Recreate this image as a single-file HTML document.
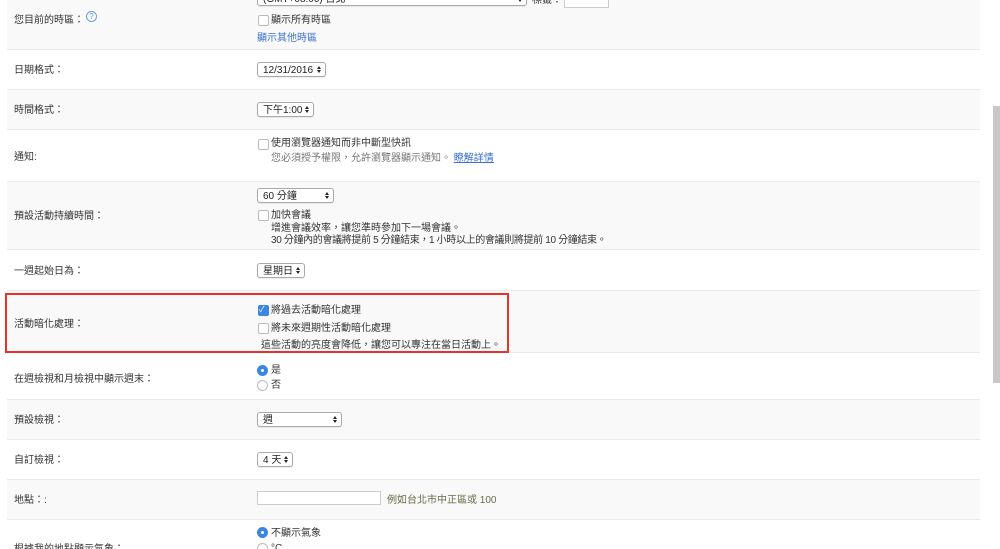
<!DOCTYPE html>
<html><head><meta charset="utf-8"><style>
html,body{margin:0;width:1000px;height:549px;overflow:hidden}
body{background:#fff;font-family:"Liberation Sans","Noto Sans CJK TC",sans-serif;font-size:10px;color:#333;position:relative}
.r{position:absolute;left:7px;width:973px;border-bottom:1px solid #ebebeb;box-sizing:border-box}
.g{background:#f9f9f9}
.a{position:absolute;white-space:nowrap;line-height:12px;margin-top:2px}
.sel{position:absolute;height:15px;border:1px solid #a9a9a9;border-radius:3px;background:#fff;box-sizing:border-box;font-size:10px;line-height:15px;padding-left:5px;color:#222;box-shadow:0 1px 1px rgba(0,0,0,.08)}
.sel:after{content:"";position:absolute;right:4px;top:3px;width:0;height:0;border-left:2px solid transparent;border-right:2px solid transparent;border-bottom:3px solid #222}
.sel:before{content:"";position:absolute;right:4px;top:7px;width:0;height:0;border-left:2px solid transparent;border-right:2px solid transparent;border-top:3px solid #222}
.cb{position:absolute;width:9px;height:9px;border:1px solid #bbb;border-radius:2px;background:#fff}
.cbc{background:#3b86e0;border-color:#3b86e0}
.rd{position:absolute;width:9px;height:9px;border:1px solid #bbb;border-radius:50%;background:#fff}
.rdc{background:#3b86e0;border-color:#3b86e0}
.rdc:after{content:"";position:absolute;left:3px;top:3px;width:3px;height:3px;border-radius:50%;background:#fff}
.lk{color:#3b6fd4}
</style></head><body>
<div class="r g" style="top:0;height:50px"></div>
<div class="r" style="top:50px;height:40px"></div>
<div class="r g" style="top:90px;height:40px"></div>
<div class="r" style="top:130px;height:52px"></div>
<div class="r g" style="top:182px;height:68px"></div>
<div class="r" style="top:250px;height:41px"></div>
<div class="r g" style="top:291px;height:62px"></div>
<div class="r" style="top:353px;height:47px"></div>
<div class="r g" style="top:400px;height:40px"></div>
<div class="r" style="top:440px;height:40px"></div>
<div class="r g" style="top:480px;height:40px"></div>
<div class="r" style="top:520px;height:29px;border-bottom:0"></div>

<div style="position:absolute;left:993px;top:106px;width:7px;height:277px;background:#c8c8c8"></div>

<div class="a" style="left:14px;top:13px">您目前的時區：</div>
<div style="position:absolute;left:86px;top:11px;width:9px;height:9px;border:1px solid #6aa0e0;border-radius:50%;color:#6aa0e0;font-size:8px;line-height:9px;text-align:center">?</div>
<div class="sel" style="left:257px;top:-9px;width:270px">(GMT+08:00) 台北</div>
<div class="a" style="left:532px;top:-7px">標籤：</div>
<div style="position:absolute;left:564px;top:-8px;width:43px;height:14px;border:1px solid #ccc;background:#fff"></div>
<div class="cb" style="left:258px;top:15px"></div><div class="a" style="left:271px;top:13px">顯示所有時區</div>
<div class="a lk" style="left:257px;top:31px">顯示其他時區</div>

<div class="a" style="left:14px;top:63px">日期格式：</div>
<div class="sel" style="left:257px;top:62px;width:69px">12/31/2016</div>

<div class="a" style="left:14px;top:103px">時間格式：</div>
<div class="sel" style="left:257px;top:102px;width:57px">下午1:00</div>

<div class="cb" style="left:258px;top:139px"></div><div class="a" style="left:271px;top:136px">使用瀏覽器通知而非中斷型快訊</div>
<div class="a" style="left:14px;top:150px">通知:</div>
<div class="a" style="left:271px;top:151px;color:#777">您必須授予權限，允許瀏覽器顯示通知。 <span class="lk" style="text-decoration:underline">瞭解詳情</span></div>

<div class="sel" style="left:257px;top:188px;width:77px">60 分鐘</div>
<div class="a" style="left:14px;top:209px">預設活動持續時間：</div>
<div class="cb" style="left:258px;top:210px"></div><div class="a" style="left:271px;top:208px">加快會議</div>
<div class="a" style="left:271px;top:221px">增進會議效率，讓您準時參加下一場會議。</div>
<div class="a" style="left:271px;top:233px;letter-spacing:-0.35px">30 分鐘內的會議將提前 5 分鐘結束，1 小時以上的會議則將提前 10 分鐘結束。</div>

<div class="a" style="left:14px;top:264px">一週起始日為：</div>
<div class="sel" style="left:257px;top:263px;width:48px">星期日</div>

<div style="position:absolute;left:5px;top:293px;width:504px;height:60px;border:2px solid #e8312a;box-sizing:border-box"></div>
<div class="a" style="left:14px;top:317px">活動暗化處理：</div>
<div class="cb cbc" style="left:258px;top:305px"></div><div class="a" style="left:259px;top:302px;color:#fff;font-size:8px">✓</div>
<div class="a" style="left:271px;top:303px">將過去活動暗化處理</div>
<div class="cb" style="left:258px;top:323px"></div><div class="a" style="left:271px;top:321px">將未來週期性活動暗化處理</div>
<div class="a" style="left:261px;top:338px">這些活動的亮度會降低，讓您可以專注在當日活動上。</div>

<div class="a" style="left:14px;top:372px">在週檢視和月檢視中顯示週末：</div>
<div class="rd rdc" style="left:257px;top:365px"></div><div class="a" style="left:271px;top:363px">是</div>
<div class="rd" style="left:257px;top:380px"></div><div class="a" style="left:271px;top:378px">否</div>

<div class="a" style="left:14px;top:413px">預設檢視：</div>
<div class="sel" style="left:257px;top:412px;width:85px">週</div>

<div class="a" style="left:14px;top:453px">自訂檢視：</div>
<div class="sel" style="left:257px;top:452px;width:36px">4 天</div>

<div class="a" style="left:14px;top:493px">地點：:</div>
<div style="position:absolute;left:257px;top:491px;width:124px;height:14px;border:1px solid #ccc;background:#fff;box-sizing:border-box"></div>
<div class="a" style="left:387px;top:493px;color:#6b6b4a">例如台北市中正區或 100</div>

<div class="rd rdc" style="left:257px;top:527px"></div><div class="a" style="left:271px;top:526px">不顯示氣象</div>
<div class="a" style="left:14px;top:542px">根據我的地點顯示氣象：</div>
<div class="rd" style="left:257px;top:543px"></div><div class="a" style="left:271px;top:541px">°C</div>
</body></html>
